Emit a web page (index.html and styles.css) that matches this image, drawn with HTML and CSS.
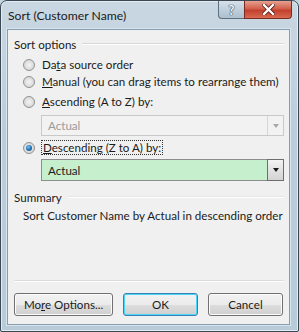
FILE: index.html
```html
<!DOCTYPE html>
<html lang="en">
<head>
  <meta charset="UTF-8">
  <title>Sort (Customer Name)</title>
  <link rel="stylesheet" href="styles.css">
</head>
<body>
  <div class="window">
    <div class="titlebar">
      <div class="title">Sort (Customer Name)</div>
      <div class="caption-buttons">
        <div class="cap-btn help">?</div>
        <div class="cap-btn close">
          <svg width="13" height="11" viewBox="0 0 13 11">
            <path d="M2 1 L11 10 M11 1 L2 10" stroke="#5a1a14" stroke-width="4" stroke-linecap="square" fill="none"/>
            <path d="M2 1 L11 10 M11 1 L2 10" stroke="#fff" stroke-width="2.4" stroke-linecap="square" fill="none"/>
          </svg>
        </div>
      </div>
    </div>

    <div class="client">
      <div class="group-head"><span>Sort options</span><div class="rule"></div></div>

      <div class="option first">
        <span class="radio"></span>
        <span>Da<u>t</u>a source order</span>
      </div>
      <div class="option">
        <span class="radio"></span>
        <span><u>M</u>anual (you can drag items to rearrange them)</span>
      </div>
      <div class="option third">
        <span class="radio"></span>
        <span><u>A</u>scending (A to Z) by:</span>
      </div>
      <div class="combo disabled">
        <span class="combo-text">Actual</span>
        <span class="combo-btn"><span class="arrow"></span></span>
      </div>
      <div class="option fourth">
        <span class="radio checked"></span>
        <span class="focused"><u>D</u>escending (Z to A) by:</span>
      </div>
      <div class="combo active">
        <span class="combo-text">Actual</span>
        <span class="combo-btn"><span class="arrow"></span></span>
      </div>

      <div class="group-head summary-head"><span>Summary</span><div class="rule faint"></div></div>
      <p class="summary">Sort Customer Name by Actual in descending order</p>

      <div class="footer">
        <div class="separator"></div>
        <div class="buttons">
          <button class="btn more">Mo<u>r</u>e Options...</button>
          <button class="btn ok">OK</button>
          <button class="btn cancel">Cancel</button>
        </div>
      </div>
    </div>
  </div>
</body>
</html>
```

FILE: styles.css
```css
body {
  margin: 0;
  padding: 0;
  background: #c3d3e0;
  font-family: Lato, 'Noto Sans', sans-serif;
  font-size: 11.6px;
  color: #1b1b1b;
  white-space: nowrap;
}

.window {
  width: 299px;
  height: 332px;
  box-sizing: border-box;
  border: 1px solid #3b4854;
  border-radius: 7px 7px 2px 2px;
  background: linear-gradient(180deg, #c9d7e2 0%, #bccdda 40%, #b8cbd9 100%);
  box-shadow: inset 0 0 0 1px #e3ecf3;
  display: flex;
  flex-direction: column;
  overflow: hidden;
}

.titlebar {
  height: 28px;
  display: flex;
  align-items: flex-start;
}

.title {
  flex: 1;
  padding: 7px 0 0 7px;
  font-size: 12.2px;
  color: #1a1a1a;
}

.caption-buttons {
  display: flex;
  margin-right: 6px;
}

.cap-btn {
  height: 18px;
  display: flex;
  align-items: center;
  justify-content: center;
  box-sizing: border-box;
  border: 1px solid #5d7081;
  border-top: none;
}

.help {
  width: 26px;
  border-radius: 0 0 0 4px;
  border-right: none;
  background: linear-gradient(180deg, #d6e1ea 0%, #bfcfdc 50%, #aebfcd 100%);
  color: #f4f7fa;
  font-weight: 700;
  font-size: 13px;
  text-shadow: 0 0 1px #3c4a56, 0 0 1px #3c4a56, 0 0 1px #3c4a56;
}

.close {
  width: 48px;
  border-radius: 0 0 4px 0;
  border-color: #7a2a22;
  background: linear-gradient(180deg, #e6a090 0%, #d2614d 45%, #c2402c 55%, #d86a50 100%);
}

.client {
  margin: 0 8px 6px 6px;
  flex: 1;
  background: #f0f0f0;
  border: 1px solid #8a9bab;
  box-shadow: 0 0 0 1px #d6e6f0;
  display: flex;
  flex-direction: column;
  padding: 6px 5px 0 6px;
}

.group-head {
  display: flex;
  align-items: center;
  height: 16px;
  gap: 6px;
}

.rule {
  flex: 1;
  border-top: 1px solid #d8d8d8;
  border-bottom: 1px solid #fff;
}

.rule.faint {
  border-top-color: #e6e6e6;
}

.option {
  display: flex;
  align-items: center;
  height: 17px;
  padding-left: 9px;
  gap: 7px;
}

.option.first {
  margin-top: 4px;
}

.option.third {
  margin-top: 3px;
}

.option.fourth {
  margin-top: 3px;
}

.radio {
  width: 12px;
  height: 12px;
  border-radius: 50%;
  box-sizing: border-box;
  border: 1px solid #929292;
  background: radial-gradient(circle at 50% 50%, #f4f4f4 0%, #dcdcdc 60%, #cfcfcf 100%);
  display: flex;
  align-items: center;
  justify-content: center;
}

.radio.checked::after {
  content: "";
  width: 6px;
  height: 6px;
  border-radius: 50%;
  background: radial-gradient(circle at 40% 35%, #7fc3f0 0%, #1d6fae 55%, #0f3f6b 100%);
}

.focused {
  outline: 1px dotted #333;
  outline-offset: 0;
  padding: 0 1px;
}

.combo {
  margin: 5px 0 0 27px;
  height: 21px;
  width: 243px;
  box-sizing: border-box;
  display: flex;
  align-items: stretch;
}

.combo-text {
  flex: 1;
  padding-left: 6px;
  display: flex;
  align-items: center;
}

.combo-btn {
  width: 16px;
  display: flex;
  align-items: center;
  justify-content: center;
  box-sizing: border-box;
}

.arrow {
  width: 0;
  height: 0;
  border-left: 3.5px solid transparent;
  border-right: 3.5px solid transparent;
  border-top: 4px solid #1a1a1a;
}

.combo.disabled {
  border: 1px solid #c9c9c9;
  background: #f2f2f2;
  color: #9b9b9b;
}

.combo.disabled .combo-btn {
  border-left: 1px solid #d6d6d6;
}

.combo.disabled .arrow {
  border-top-color: #a8a8a8;
}

.combo.active {
  margin-top: 3px;
  height: 22px;
  border: 1px solid #8d8d8d;
  background: #c6efce;
}

.combo.active .combo-btn {
  border: 1px solid #6e6e6e;
  background: linear-gradient(180deg, #f4f4f4 0%, #e2e2e2 50%, #d4d4d4 100%);
  margin: -1px -1px -1px 0;
  width: 17px;
}

.summary-head {
  margin-top: 8px;
}

.summary {
  margin: 2px 0 0 0;
  padding-left: 9px;
  line-height: 17px;
}

.footer {
  margin-top: auto;
}

.separator {
  border-top: 1px solid #dcdcdc;
  border-bottom: 1px solid #fff;
}

.buttons {
  display: flex;
  gap: 10px;
  margin: 11px 0 8px 0;
}

.btn {
  font-family: inherit;
  font-size: 11.6px;
  color: #1b1b1b;
  height: 23px;
  border: 1px solid #707070;
  border-radius: 3px;
  background: linear-gradient(180deg, #f2f2f2 0%, #ebebeb 50%, #dddddd 52%, #cfcfcf 100%);
  box-shadow: inset 0 0 0 1px #fcfcfc;
  padding: 0;
}

.btn.more {
  width: 99px;
}

.btn.ok {
  width: 75px;
  border-color: #3c7fb1;
  box-shadow: inset 0 0 0 1px #48d7fb;
}

.btn.cancel {
  width: 75px;
}
```
